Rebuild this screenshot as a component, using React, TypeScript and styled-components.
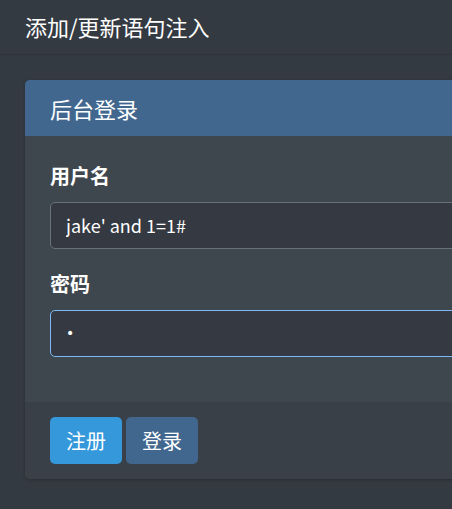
import React from "react";
import styled, { createGlobalStyle } from "styled-components";

const GlobalStyle = createGlobalStyle`
  html, body {
    margin: 0;
    padding: 0;
    background: #343a41;
    overflow: hidden;
  }
  body {
    font-family: "Noto Sans CJK SC", "Noto Sans", sans-serif;
    color: #ffffff;
  }
  * { box-sizing: border-box; }
`;

const Page = styled.div`
  width: 452px;
  min-height: 509px;
  background: #343a41;
`;

const TopBar = styled.header`
  height: 55px;
  display: flex;
  align-items: center;
  padding: 0 25px;
  border-bottom: 1px solid #2e3339;
  background: #343a41;
`;

const PageTitle = styled.h1`
  margin: 0;
  font-size: 22px;
  font-weight: 400;
  line-height: 1;
  color: #ffffff;
  margin-top: -2px;
`;

const Main = styled.main`
  padding: 25px 0 0 25px;
`;

const Card = styled.section`
  width: 720px;
  border-radius: 5px;
  overflow: hidden;
  background: #3f474e;
  box-shadow: 0 1px 3px rgba(0, 0, 0, 0.25);
`;

const CardHeader = styled.div`
  height: 56px;
  display: flex;
  align-items: center;
  padding: 0 25px;
  background: #41678f;
`;

const CardTitle = styled.h2`
  margin: 0;
  font-size: 22px;
  font-weight: 400;
  line-height: 1;
  color: #ffffff;
`;

const CardBody = styled.div`
  padding: 25px 25px 25px;
  background: #3f474e;
`;

const FormGroup = styled.div`
  display: flex;
  flex-direction: column;
  margin-bottom: 20px;
`;

const Label = styled.label`
  font-size: 20px;
  font-weight: 700;
  line-height: 30px;
  margin-bottom: 10.5px;
  color: #ffffff;
`;

const Input = styled.input<{ $focused?: boolean }>`
  height: 47.5px;
  width: 100%;
  padding: 0 15px;
  font-family: "Noto Sans CJK SC", "Noto Sans", sans-serif;
  font-size: 18px;
  color: #ffffff;
  background: #353a42;
  border: 1px solid ${(p) => (p.$focused ? "#7db8f5" : "#6b7178")};
  border-radius: 5px;
  outline: none;

  &[type="password"] {
    font-family: "DejaVu Sans", sans-serif;
    font-size: 14px;
    letter-spacing: 0;
  }
`;

const CardFooter = styled.div`
  display: flex;
  gap: 4px;
  padding: 15px 25px 15px;
  background: #3a4048;
`;

const Button = styled.button<{ $variant: "info" | "primary" }>`
  height: 47px;
  width: 72px;
  padding: 0;
  border: none;
  border-radius: 5px;
  font-family: "Noto Sans CJK SC", "Noto Sans", sans-serif;
  font-size: 20px;
  color: #ffffff;
  background: ${(p) => (p.$variant === "info" ? "#3498db" : "#41678f")};
  cursor: pointer;
`;

export default function App() {
  return (
    <>
      <GlobalStyle />
      <Page>
        <TopBar>
          <PageTitle>添加/更新语句注入</PageTitle>
        </TopBar>
        <Main>
          <Card>
            <CardHeader>
              <CardTitle>后台登录</CardTitle>
            </CardHeader>
            <CardBody>
              <FormGroup>
                <Label htmlFor="username">用户名</Label>
                <Input id="username" type="text" defaultValue="jake' and 1=1#" />
              </FormGroup>
              <FormGroup>
                <Label htmlFor="password">密码</Label>
                <Input id="password" type="password" defaultValue="1" $focused />
              </FormGroup>
            </CardBody>
            <CardFooter>
              <Button $variant="info">注册</Button>
              <Button $variant="primary">登录</Button>
            </CardFooter>
          </Card>
        </Main>
      </Page>
    </>
  );
}
